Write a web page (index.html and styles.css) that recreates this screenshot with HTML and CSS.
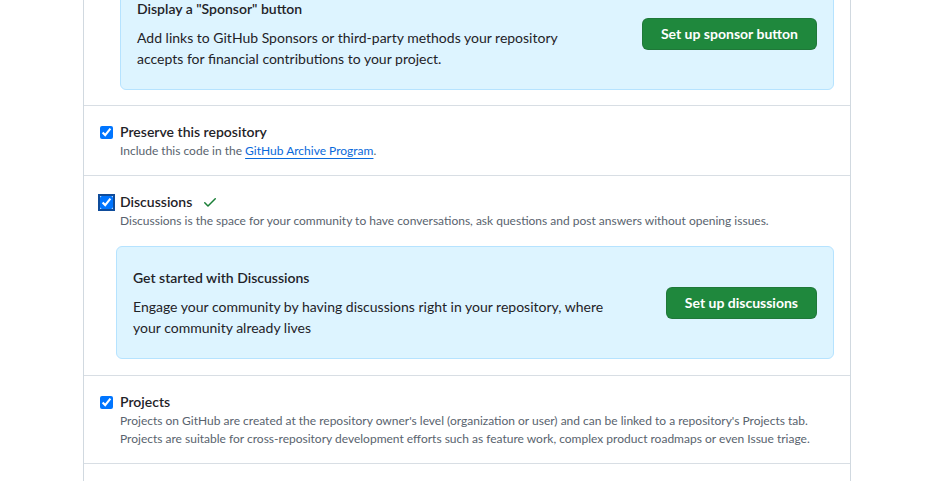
FILE: index.html
```html
<!DOCTYPE html>
<html lang="en">
<head>
    <meta charset="UTF-8">
    <title>Repository settings - Features</title>
    <link rel="stylesheet" href="styles.css">
</head>
<body>
    <div class="settings">
        <!-- Sponsorships (scrolled, only the callout is visible) -->
        <div class="row row-first">
            <div class="callout callout-sponsor">
                <div class="callout-text">
                    <h4>Display a "Sponsor" button</h4>
                    <p>Add links to GitHub Sponsors or third-party methods your repository accepts for financial contributions to your project.</p>
                </div>
                <button class="btn-primary">Set up sponsor button</button>
            </div>
        </div>

        <div class="row">
            <div class="check-row">
                <input type="checkbox" checked>
                <div>
                    <label class="check-title">Preserve this repository</label>
                    <p class="note">Include this code in the <a href="#">GitHub Archive Program</a>.</p>
                </div>
            </div>
        </div>

        <div class="row row-discussions">
            <div class="check-row">
                <input type="checkbox" class="focused" checked>
                <div>
                    <label class="check-title">Discussions
                        <svg class="saved" width="16" height="16" viewBox="0 0 16 16"><path d="M13.78 4.22a.75.75 0 0 1 0 1.06l-7.25 7.25a.75.75 0 0 1-1.06 0L2.22 9.28a.751.751 0 0 1 .018-1.042.751.751 0 0 1 1.042-.018L6 10.940l6.72-6.72a.75.75 0 0 1 1.06 0Z"></path></svg>
                    </label>
                    <p class="note">Discussions is the space for your community to have conversations, ask questions and post answers without opening issues.</p>
                </div>
            </div>
            <div class="callout callout-discussions">
                <div class="callout-text">
                    <h4>Get started with Discussions</h4>
                    <p>Engage your community by having discussions right in your repository, where your community already lives</p>
                </div>
                <button class="btn-primary">Set up discussions</button>
            </div>
        </div>

        <div class="row">
            <div class="check-row">
                <input type="checkbox" checked>
                <div>
                    <label class="check-title">Projects</label>
                    <p class="note">Projects on GitHub are created at the repository owner's level (organization or user) and can be linked to a repository's Projects tab. Projects are suitable for cross-repository development efforts such as feature work, complex product roadmaps or even Issue triage.</p>
                </div>
            </div>
        </div>

        <div class="row row-last"></div>
    </div>
</body>
</html>
```

FILE: styles.css
```css
/* General Styles */
body {
    margin: 0;
    background-color: white;
    font-family: 'Lato', sans-serif;
    color: #1f2328;
    font-size: 14px;
    line-height: 1.5;
    overflow: hidden;
}

.settings {
    margin-left: 83px;
    width: 766px;
    border-left: 1px solid #d1d9e0;
    border-right: 1px solid #d1d9e0;
    margin-top: -39px;
}

.row {
    padding: 16px 16px 15px;
    border-top: 1px solid #d8dee4;
}

.row-first {
    border-top: none;
    padding-left: 36px;
}

.row-discussions {
    padding-bottom: 16px;
}

.row-last {
    height: 60px;
}

/* Checkbox rows */
.check-row {
    display: grid;
    grid-template-columns: 13px 1fr;
    column-gap: 7px;
}

.check-row input {
    width: 13px;
    height: 13px;
    margin: 4px 0 0 0;
}

.check-row input.focused {
    outline: 2px solid #0f4c9b;
    outline-offset: 0;
}

.check-title {
    display: flex;
    align-items: center;
    gap: 10px;
    font-weight: 600;
    font-size: 14px;
    line-height: 20px;
}

.saved {
    fill: #1a7f37;
    width: 16px;
    height: 16px;
}

.note {
    margin: 0;
    font-size: 12px;
    line-height: 18px;
    color: #59636e;
}

.note a {
    color: #0969da;
    text-decoration: underline;
    text-underline-offset: 3px;
}

/* Callouts */
.callout {
    display: flex;
    align-items: center;
    padding: 20px 16px;
    background-color: #ddf4ff;
    border: 1px solid #b6e3ff;
    border-radius: 6px;
}

.callout-discussions {
    margin: 16px 0 0 16px;
}

.callout-text {
    flex: 1;
    margin-right: 48px;
}

.callout h4 {
    margin: 0 0 8px 0;
    font-size: 14px;
    font-weight: 600;
    line-height: 21px;
}

.callout p {
    margin: 0;
    font-size: 14px;
    line-height: 21px;
}

.btn-primary {
    height: 32px;
    padding: 0 18px;
    font-family: inherit;
    font-size: 14px;
    font-weight: 700;
    color: white;
    background-color: #1f883d;
    border: 1px solid rgba(31, 35, 40, 0.15);
    border-radius: 6px;
    white-space: nowrap;
    cursor: pointer;
}
```
